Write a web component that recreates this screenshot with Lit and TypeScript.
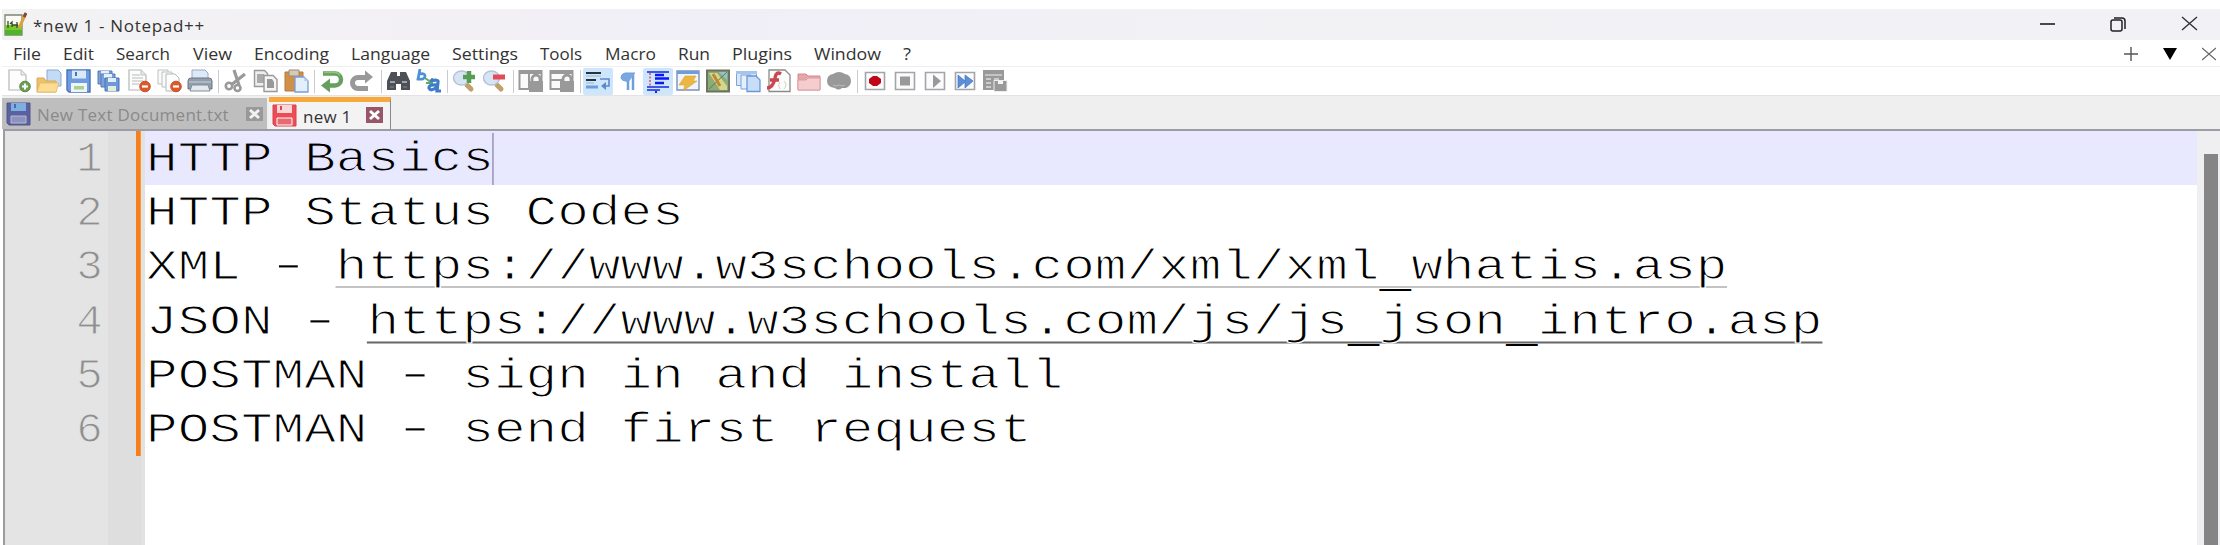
import { LitElement, html, css, svg } from 'lit';
import { customElement } from 'lit/decorators.js';

const floppy = (c: string, d: string, l: string) => svg`
  <path d="M1 1h23v22H3l-2-2z" fill=${c} stroke=${d} stroke-width="1.4"/>
  <path d="M6 1.5h14v8H6z" fill=${l}/><path d="M9 3h2v4H9z" fill=${d}/>
  <path d="M5 14h16v9H5z" fill="#eef4f8"/><path d="M8 17h10v3.500H8z" fill="#a9d08f"/>`;
const page = svg`<path d="M3 1h12l5 5v15H3z" fill="#fdfdfd" stroke="#b4b8b8" stroke-width="1.2"/><path d="M15 1v5h5" fill="#e8e8e8" stroke="#c2c2c2"/>`;
const minus = svg`<circle cx="19" cy="17.500" r="5.300" fill="#db5a2b" stroke="#c8502a"/><path d="M16 17.500h6" stroke="#fff" stroke-width="2.200"/>`;
const lens = svg`<path d="M15 16l4 4" stroke="#bfa169" stroke-width="5" stroke-linecap="round"/><ellipse cx="9.500" cy="9" rx="8" ry="7" fill="#d7e4f4" stroke="#b5c3da" stroke-width="1.500"/>`;
const box = svg`<path d="M3.500 3.500h19v17h-19z" fill="#fbfbfb" stroke="#a3a5ab" stroke-width="1.600"/>`;
const lock = svg`<path d="M11 12h14v11H11z" fill="#999"/><path d="M14 12v-2a4 4 0 0 1 8 0v2" fill="#fafafa" stroke="#999" stroke-width="2.800"/>`;

const icons: Record<string, unknown> = {
  new: svg`${page}<circle cx="19" cy="17.500" r="5.300" fill="#6c9f52" stroke="#568a43"/><path d="M16 17.500h6M19 14.500v6" stroke="#fff" stroke-width="2"/>`,
  open: svg`<path d="M11 1h11l3 3v13H11z" fill="#c3dbf5" stroke="#87a9d8"/><path d="M1 9h7l2 3h10v11H1z" fill="#ecc168" stroke="#dca95a"/><path d="M4 14h17l2 0-3 9H1z" fill="#fadc93" stroke="#e4b766" stroke-width=".8"/>`,
  save: floppy('#6f9be0', '#4972ba', '#d9e9f8'),
  saveall: svg`<path d="M2 2h14v13H2z" fill="#7ca2d8" stroke="#557ab8"/><path d="M5 2h8v4H5z" fill="#e6f0fa"/><path d="M5 5h14v13H5z" fill="#7ca2d8" stroke="#557ab8"/><path d="M8 5h8v4H8z" fill="#e6f0fa"/><path d="M9 9h14v13H9z" fill="#6f98d8" stroke="#4972ba"/><path d="M12 9h8v4h-8z" fill="#e2eef9"/><path d="M12 17h8v5h-8z" fill="#e3edda"/>`,
  close: svg`${page}<path d="M6 6h8M6 9h11M6 12h11M6 15h7" stroke="#b6b9bd" stroke-width="1.200"/>${minus}`,
  closeall: svg`<path d="M1 1h10v14H1z" fill="#fafafa" stroke="#bdc1c2"/><path d="M5 3h10v15H5z" fill="#fafafa" stroke="#bdc1c2"/><path d="M9 5h9l4 4v13H9z" fill="#fdfdfd" stroke="#b4b8b8"/>${minus}`,
  print: svg`<path d="M5 11V1h13l3 3v7z" fill="#dbe9f8" stroke="#9ba9bc"/><path d="M1 12q0-3 3-3h18q3 0 3 3v8H1z" fill="#929eab" stroke="#6d7682"/><path d="M2 13h22" stroke="#c8d2dc"/><path d="M5 16h16l2 6H3z" fill="#e2e9ef" stroke="#828d9a"/>`,
  cut: svg`<path d="M11 1l5 15M22 5L8 16" stroke="#999" stroke-width="3.200"/><circle cx="6" cy="17" r="3.200" fill="none" stroke="#999" stroke-width="2.600"/><circle cx="14.500" cy="19" r="3" fill="none" stroke="#999" stroke-width="2.600"/>`,
  copy: svg`<path d="M1.500 1.500h10l3 3v13h-13z" fill="#eee" stroke="#999" stroke-width="1.400"/><path d="M4 5h7v9H4z" fill="#aaa"/><path d="M11 6.500h9l4 4v12H11z" fill="#f5f5f5" stroke="#999" stroke-width="1.400"/><path d="M14 10h5l2 3v6h-7z" fill="#999"/>`,
  paste: svg`<path d="M2 3h18v19H2z" fill="#cf9149" stroke="#b7793b"/><path d="M6 1h10v6H6z" fill="#d4cab9" stroke="#9c8a70"/><path d="M12 8h9l4 4v11H12z" fill="#e4effc" stroke="#779ed9" stroke-width="1.300"/><path d="M21 8v4h4" fill="#b7d2f3"/>`,
  undo: svg`<path d="M4 4.500h12a6 6 0 0 1 0 12H9" fill="none" stroke="#65a05c" stroke-width="4.500"/><path d="M11 9.500v14l-9-7z" fill="#65a05c"/><path d="M5 3.500h11a6 6 0 0 1 5 3" fill="none" stroke="#93c17f" stroke-width="1.500"/>`,
  redo: svg`<path d="M19 19.500H9a5.500 5.500 0 0 1 0-11h8" fill="none" stroke="#999" stroke-width="5"/><path d="M16 1.500v13l8-6.500z" fill="#999"/>`,
  find: svg`<path d="M5 3h6v4h3V3h6l4 9v9h-9v-6h-5v6H1v-9z" fill="#4d5157"/><path d="M4 13h5M16 13h5" stroke="#9ca3ab" stroke-width="2"/><path d="M4 18h4M17 18h4" stroke="#82878e"/>`,
  replace: svg`<path d="M4 0l-2 10q7 1 7-3 0-3-5-2" fill="none" stroke="#4e91d8" stroke-width="2.800"/><path d="M9 9l7 5m0-5v5h-6" fill="none" stroke="#64a764" stroke-width="2"/><path d="M14 12q9-2 8 1l-1 9h4M21 16q-8-1-8 3 2 4 8-1" fill="none" stroke="#3f7cc9" stroke-width="3.200"/>`,
  zin: svg`${lens}<path d="M11 8h12M17 2v12" stroke="#579c52" stroke-width="4.500"/>`,
  zout: svg`${lens}<path d="M11 8h12" stroke="#e14c55" stroke-width="5"/>`,
  syncv: svg`<path d="M1.500 2h22v18h-22zM11 2v18M1 3h23" fill="#fafafa" stroke="#999" stroke-width="2"/><path d="M1 3h23" stroke="#999" stroke-width="4"/>${lock}`,
  synch: svg`<path d="M1.500 2h22v18h-22zM2 11h21" fill="#fafafa" stroke="#999" stroke-width="2"/><path d="M1 3h23" stroke="#999" stroke-width="4"/>${lock}`,
  wrap: svg`<path d="M1 4h15M1 11h10" stroke="#27343b" stroke-width="2.200"/><path d="M1 7h15M1 14h8" stroke="#9ab7cf"/><path d="M1 18h12" stroke="#6d9ddc" stroke-width="3"/><path d="M15 10h9v7h-4" fill="none" stroke="#5b89ca" stroke-width="1.600"/><path d="M21 13v8l-5-4z" fill="#5b89ca"/>`,
  pilcrow: svg`<path d="M18 4v17M13 4v17" stroke="#6e9edb" stroke-width="2.500"/><path d="M20 4h-10q-4 1-4 4.500t8 4" fill="#79a8e0" stroke="#6e9edb"/>`,
  indent: svg`<path d="M2 3h22M2 18h22M2 21h13" stroke="#1428d8" stroke-width="1.600"/><path d="M10 6h9M10 9.500h14M10 14h9" stroke="#0816fa" stroke-width="2.600"/><path d="M5 4v13" stroke="#e5417c" stroke-width="1.500" stroke-dasharray="2 1.500"/><path d="M10 23h2" stroke="#1428d8" stroke-width="2"/>`,
  udl: svg`<path d="M2 2h22v19H2z" fill="#f1f5fb" stroke="#7891bb" stroke-width="1.400"/><path d="M2 2h22v3H2z" fill="#719bd9"/><path d="M10 7h11l-3 5h4L8 22l2-6H4z" fill="#ecb642" stroke="#dba33d" stroke-width=".6"/>`,
  map: svg`<path d="M2 1.500h22v21H2z" fill="#8cac76" stroke="#6c7160" stroke-width="2"/><path d="M4 4l8 0 10 13v4H15z" fill="#d7d68d"/><path d="M14 3h8v8z" fill="#93c3d3"/><path d="M4 20L22 3" stroke="#617b54"/><path d="M8 5l7 12" stroke="#c4862e" stroke-width="3"/>`,
  docs: svg`<path d="M1.500 2.500h20v14h-20z" fill="#d9e8f9" stroke="#7da3d7"/><path d="M1 2h21v3H1z" fill="#a4c5ed"/><path d="M6 6h10v14H6z" fill="#e5f0fc" stroke="#76a0d8"/><path d="M12 7h9l4 4v11.500H12z" fill="#c8def8" stroke="#6a98d7" stroke-width="1.300"/>`,
  func: svg`<path d="M4 1h16l5 5v16.500H4z" fill="#fcfcfc" stroke="#888c88" stroke-width="1.300"/><path d="M16 5q-5-3-6 4-2 10-8 10M5 11h9" fill="none" stroke="#cb4650" stroke-width="3.500"/><path d="M19 12q4 4 0 8M15 13q-3 3 0 7" fill="none" stroke="#ccd4bd"/>`,
  folder: svg`<path d="M2 5h8l2 2h12v14H2z" fill="#e3a6a9" stroke="#d5898e"/><path d="M2 11h8l2-2h12v12H2z" fill="#f5cdce" stroke="#dc9fa3"/>`,
  monitor: svg`<path d="M1 12q0-6 6-7 6-4 12 0 6 1 6 7 0 5-5 7h-4q-4 3-7 0Q1 18 1 12z" fill="#999"/><path d="M7 16l3 1 3-1 3 1 3-1" fill="none" stroke="#bbb"/>`,
  record: svg`${box}<path d="M11 7h4l4 3v4l-4 3h-4l-4-3v-4z" fill="#c00718"/>`,
  stop: svg`${box}<path d="M8 7.500h10v9H8z" fill="#999"/>`,
  play: svg`${box}<path d="M11 5.500l8 6.500-8 7z" fill="#999"/>`,
  multi: svg`${box}<path d="M6 6l7 6V6l8 6-8 7v-6l-7 6z" fill="#5b8fd9" stroke="#3c71bd" stroke-width=".7"/>`,
  savemacro: svg`<path d="M1 1h21v20H1z" fill="#999"/><path d="M3 6h17" stroke="#eee"/><path d="M4 10h5m3 0h5M4 14h5M4 18h5" stroke="#ddd" stroke-width="1.500"/><path d="M12 11.500h13v11H12z" fill="#999" stroke="#eee"/><path d="M16 12h5v3h-5z" fill="#f4f4f4"/>`,
};

// '|' is a separator; a trailing '*' marks a pressed button.
const tools = ['new', 'open', 'save', 'saveall', 'close', 'closeall', 'print', '|', 'cut', 'copy', 'paste', '|', 'undo', 'redo', '|', 'find', 'replace', '|', 'zin', 'zout', '|', 'syncv', 'synch', '|', 'wrap*', 'pilcrow', 'indent*', 'udl', 'map', 'docs', 'func', 'folder', 'monitor', '|', 'record', 'stop', 'play', 'multi', 'savemacro'];

const menus: [string, number][] = [['File', 28], ['Edit', 31], ['Search', 54], ['View', 39], ['Encoding', 75], ['Language', 79], ['Settings', 66], ['Tools', 42], ['Macro', 51], ['Run', 32], ['Plugins', 60], ['Window', 67], ['?', 8]];

const lines: [string, string?][] = [
  ['HTTP Basics'],
  ['HTTP Status Codes'],
  ['XML - ', 'https://www.w3schools.com/xml/xml_whatis.asp'],
  ['JSON - ', 'https://www.w3schools.com/js/js_json_intro.asp'],
  ['POSTMAN - sign in and install'],
  ['POSTMAN - send first request'],
];

// Hyphens are widened, and underscores sit below the link's rule.
const glyphs = (s: string) => s.split(/([-_])/).map((p) => p === '-' ? html`<span class="dash">-</span>` : p === '_' ? html`<span class="under">_</span>` : p);

@customElement('app-root')
export class AppRoot extends LitElement {
  static styles = css`
    :host { display: block; height: 545px; overflow: hidden; background: #fff; font-family: "Open Sans", "Noto Sans", sans-serif; color: #333; }
    * { box-sizing: border-box; }
    svg { display: block; flex: none; }
    .app { display: flex; flex-direction: column; height: 545px; padding: 9px 0 0 2px; }
    .title { display: flex; align-items: center; height: 31px; flex: none; background: linear-gradient(90deg, #f3f2f3 0, #f2f0f5 500px, #f0eff8 700px, #f2f1f4 1300px, #f2f1f5); font-size: 17px; }
    .title .name { margin-left: 6px; padding-top: 1px; flex: 1; letter-spacing: .7px; white-space: nowrap; }
    .win { display: flex; gap: 54px; padding-right: 22px; }
    .menu { display: flex; align-items: center; height: 27px; flex: none; padding-left: 11px; border-bottom: 1px solid #efeff1; }
    .items { display: flex; gap: 22.200px; flex: 1; }
    .items svg { overflow: visible; }
    .items text { font-size: 16.500px; fill: #333; }
    .side { display: flex; gap: 25px; padding: 2px 4px 0 0; }
    .tools { display: flex; align-items: center; height: 29px; flex: none; padding-left: 2px; border-bottom: 1px solid #e3e3e3; }
    .slot { width: 30.100px; height: 27px; display: grid; place-items: center; flex: none; }
    .on { background: #cde6fc; border-radius: 2px; }
    .sep { width: 1px; height: 23px; background: #c9cbd0; margin: 0 2.200px 0 3px; flex: none; }
    .tabs { display: flex; align-items: flex-end; height: 33px; flex: none; background: #efefef; }
    .tab { display: flex; align-items: center; height: 31px; padding: 0 4px; font-size: 17px; white-space: nowrap; }
    .label { flex: 1; margin-left: 6px; padding-top: 2px; letter-spacing: .25px; }
    .idle { width: 265px; background: #bebebe; color: #8a8a8a; margin-right: 2px; }
    .active { width: 122px; height: 32px; background: #f4f3f4; border-top: 5px solid #f8a83c; border-right: 1px solid #888; padding: 0 7px 0 3px; }
    .edit { display: flex; flex: 1; min-height: 0; border-top: 2px solid #9c9ca4; border-left: 2px solid #9c9ca0; margin-left: 1px; }
    .nums { width: 103px; background: #e4e4e4; color: #8f8f8f; text-align: right; --paper: #e4e4e4; }
    .fold { width: 28px; background: #dedede; }
    .change { width: 5px; background: #dedede; }
    .bar { height: 325px; background: linear-gradient(90deg, #f57f1c 0 70%, #fba94c); }
    .gap { width: 4px; background: #e2e2e2; }
    .mono { font: 42px/54.200px "Liberation Mono", monospace; white-space: pre; height: 54.200px; -webkit-text-stroke: 1.100px var(--paper); }
    .nums .mono { transform: translateY(1.500px) scaleX(1.050); transform-origin: 100% 0; padding-right: 5px; }
    .text { flex: 1; --paper: #fff; color: #000; }
    .row { height: 54.200px; display: flex; }
    .row .mono { transform: translate(1px, 1.500px) scaleX(1.2548); transform-origin: 0 0; flex: none; }
    .cur { background: #e8e8ff; --paper: #e8e8ff; overflow: hidden; }
    .cur .mono { box-shadow: inset -1px 0 #8884a8; }
    .dash { display: inline-block; transform: translateY(-1px) scaleX(1.450); }
    .under { display: inline-block; transform: translateY(7px); -webkit-text-stroke-width: 0; }
    .url { display: inline-block; height: 47px; border-bottom: 1px solid #888; }
    .strong .url { height: 48px; border-bottom: 2px solid #666; }
    .scroll { width: 23px; background: #efeff1; padding: 23px 2px 0 7px; }
    .thumb { height: 100%; background: #858585; }
  `;

  render() {
    return html`<div class="app">
      <div class="title">
        <svg width="25" height="25" viewBox="0 0 25 25"><path d="M3 3h17v20H3z" fill="#fbfbf4" stroke="#7b8570" stroke-width="1.300"/><path d="M3 13h17v10H3z" fill="#7bc62b"/><path d="M3 18h17v5H3z" fill="#50b42a"/><path d="M6 9v7M8 12l2-2v5M10 13h6M15 10v6" stroke="#344c2d" stroke-width="1.300" fill="none"/><path d="M23 3l-6 13" stroke="#dba13d" stroke-width="3"/><path d="M24 1l-2 4" stroke="#7c4a32" stroke-width="3"/></svg>
        <span class="name">*new 1 - Notepad++</span>
        <div class="win">
          <svg width="17" height="17"><path d="M1 8h15" stroke="#111" stroke-width="1.500"/></svg>
          <svg width="17" height="17"><rect x="1" y="4" width="11" height="11" rx="2" fill="none" stroke="#222" stroke-width="1.500"/><path d="M4 2h8q3 0 3 3v8" fill="none" stroke="#222" stroke-width="1.500"/></svg>
          <svg width="17" height="17"><path d="M1 1l15 13M16 1L1 14" stroke="#333" stroke-width="1.400"/></svg>
        </div>
      </div>
      <div class="menu">
        <div class="items">${menus.map(([m, w]) => html`<svg width=${w} height="24"><text x="0" y="19" textLength=${w} lengthAdjust="spacingAndGlyphs">${m}</text></svg>`)}</div>
        <div class="side">
          <svg width="14" height="14"><path d="M0 7h14M7 0v14" stroke="#555" stroke-width="1.400"/></svg>
          <svg width="14" height="14"><path d="M0 1h14L7 13z" fill="#000"/></svg>
          <svg width="14" height="14"><path d="M0 1l14 12M14 1L0 13" stroke="#666" stroke-width="1.300"/></svg>
        </div>
      </div>
      <div class="tools">${tools.map((t) => t === '|' ? html`<i class="sep"></i>` : html`<div class="slot ${t.endsWith('*') ? 'on' : ''}"><svg width="26" height="24" viewBox="0 0 26 24">${icons[t.replace('*', '')]}</svg></div>`)}</div>
      <div class="tabs">
        <div class="tab idle"><svg width="25" height="24" viewBox="0 0 25 24"><path d="M1 1h23v22H3l-2-2z" fill="#5a619f" stroke="#565488"/><path d="M5 1h15v8H5z" fill="#7dafe0"/><path d="M8 2h2v4H8z" fill="#4c6ba5"/><path d="M5 14h15v7H5z" fill="#8d91be" stroke="#b9b9d5"/></svg><span class="label">New Text Document.txt</span><svg width="17" height="16"><path d="M0 1h17v14H0z" fill="#999"/><path d="M4 4l9 8M13 4l-9 8" stroke="#f2f2f2" stroke-width="3"/></svg></div>
        <div class="tab active"><svg width="25" height="24" viewBox="0 0 25 24"><path d="M1 1h23v21H3l-2-2z" fill="#ed4b55" stroke="#d8424b"/><path d="M5 1h15v8H5z" fill="#fbd8d8"/><path d="M8 2h2v4H8z" fill="#dc4751"/><path d="M5 14h15v7H5z" fill="#e66a70" stroke="#fff"/></svg><span class="label">new 1</span><svg width="17" height="17"><path d="M0 0h17v16H0z" fill="#985769"/><path d="M4 4l9 8M13 4l-9 8" stroke="#fff" stroke-width="3"/></svg></div>
      </div>
      <div class="edit">
        <div class="nums">${lines.map((_, i) => html`<div class="mono">${i + 1}</div>`)}</div>
        <div class="fold"></div>
        <div class="change"><div class="bar"></div></div>
        <div class="gap"></div>
        <div class="text">${lines.map(([t, u], i) => html`<div class="row ${i === 0 ? 'cur' : ''} ${i === 3 ? 'strong' : ''}"><div class="mono">${glyphs(t)}${u ? html`<span class="url">${glyphs(u)}</span>` : ''}</div></div>`)}</div>
        <div class="scroll"><div class="thumb"></div></div>
      </div>
    </div>`;
  }
}
